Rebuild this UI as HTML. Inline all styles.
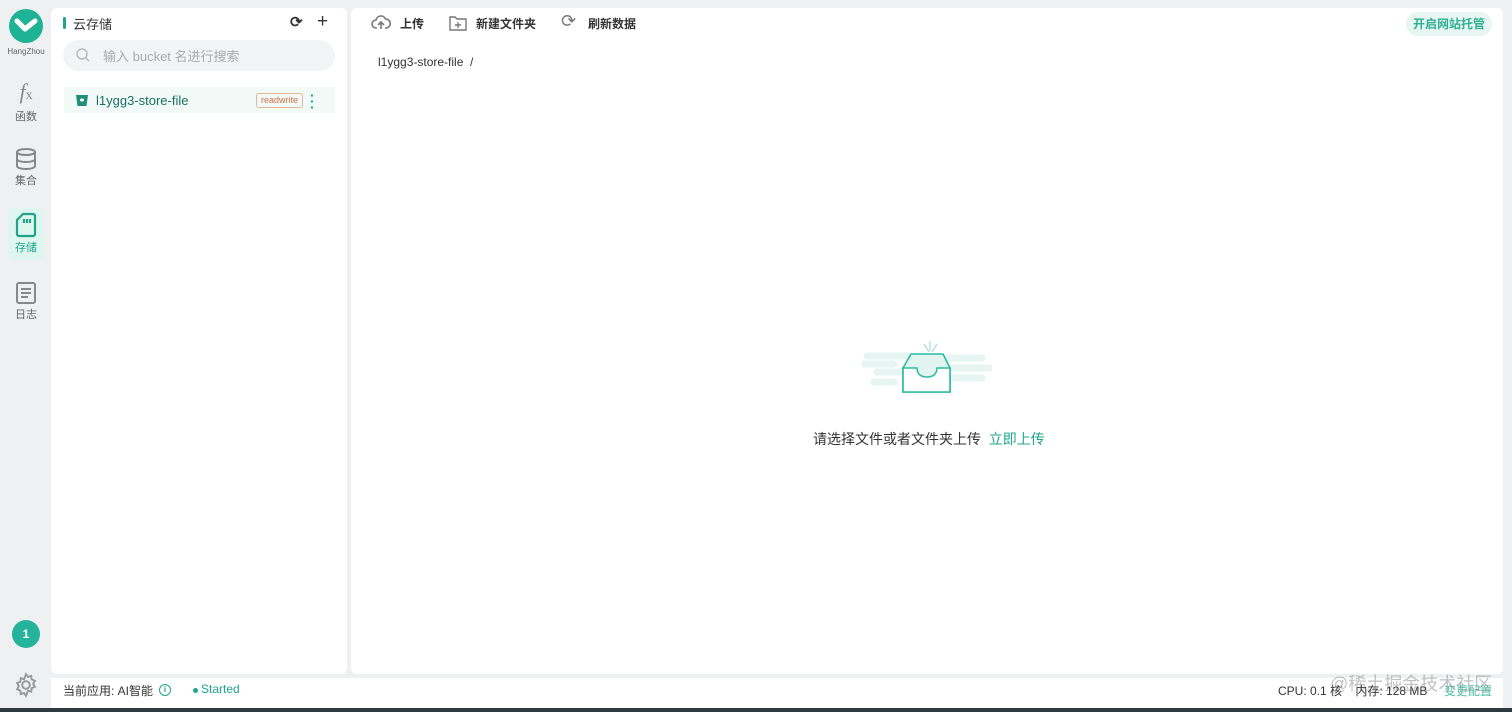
<!DOCTYPE html>
<html><head><meta charset="utf-8"><style>
*{margin:0;padding:0;box-sizing:border-box}
body{width:1512px;height:712px;background:#eff0f2;font-family:"Liberation Sans","Noto Sans CJK SC",sans-serif;position:relative;overflow:hidden;color:#333}
.abs{position:absolute}
.rail .it{position:absolute;left:8px;width:36px;text-align:center;font-size:11px;color:#666}
.panel{background:#fff;border-radius:6px}
</style></head><body>
<div class="abs" style="left:9px;top:9px;width:34px;height:34px;border-radius:50%;background:#1fb396"></div>
<svg class="abs" style="left:14px;top:18px" width="24" height="16" viewBox="0 0 24 16"><path d="M3 3 L11 11 L21 3" stroke="#fff" stroke-width="5" fill="none" stroke-linejoin="round" stroke-linecap="round"/></svg>
<div class="abs" style="left:0;top:47px;width:52px;text-align:center;font-size:8px;color:#666">HangZhou</div>
<div class="rail">
<div class="it" style="top:80px"><div style="font-family:'Liberation Serif',serif;font-style:italic;font-size:22px;color:#888;line-height:24px">f<span style="font-size:14px;font-style:normal">x</span></div><div>函数</div></div>
<div class="it" style="top:147px"><svg width="24" height="24" viewBox="0 0 24 24" fill="none" stroke="#888" stroke-width="2"><ellipse cx="12" cy="5" rx="9" ry="3"/><path d="M3 5v14c0 1.7 4 3 9 3s9-1.3 9-3V5M3 12c0 1.7 4 3 9 3s9-1.3 9-3"/></svg><div style="margin-top:-2px">集合</div></div>
<div class="abs" style="left:8px;top:208px;width:36px;height:52px;background:#dff5ef;border-radius:6px"></div>
<div class="it" style="top:212px;color:#1fa58a"><svg width="24" height="26" viewBox="0 0 24 26" fill="none" stroke="#1fa58a" stroke-width="2.2"><path d="M9 2h10a2 2 0 0 1 2 2v18a2 2 0 0 1-2 2H5a2 2 0 0 1-2-2V8z"/><path d="M10 7v4M13 7v4M16 7v4"/></svg><div style="margin-top:-2px">存储</div></div>
<div class="it" style="top:281px"><svg width="24" height="24" viewBox="0 0 24 24" fill="none" stroke="#888" stroke-width="2"><rect x="3" y="2" width="18" height="20" rx="2"/><path d="M7 8h10M7 12h10M7 16h7"/></svg><div style="margin-top:-2px">日志</div></div>
</div>
<div class="abs" style="left:12px;top:620px;width:28px;height:28px;border-radius:50%;background:#25b49b;color:#fff;font-size:12px;text-align:center;line-height:28px;font-weight:bold">1</div>
<svg class="abs" style="left:13px;top:672px" width="26" height="26" viewBox="0 0 24 24" fill="none" stroke="#999" stroke-width="1.8"><circle cx="12" cy="12" r="3.5"/><path d="M12 2l1.8 2.6 3-1 .4 3.2 3 1.3-1.6 2.8 1.6 2.8-3 1.3-.4 3.2-3-1L12 22l-1.8-2.6-3 1-.4-3.2-3-1.3L5.4 13 3.8 10.2l3-1.3.4-3.2 3 1z"/></svg>
<div class="abs panel" style="left:51px;top:8px;width:296px;height:666px"></div>
<div class="abs" style="left:63px;top:17px;width:3px;height:12px;background:#1fa58a;border-radius:2px"></div>
<div class="abs" style="left:73px;top:14px;font-size:13px;color:#333">云存储</div>
<div class="abs" style="left:290px;top:13px;font-size:15px;font-weight:bold">⟳</div>
<div class="abs" style="left:317px;top:11px;font-size:19px">+</div>
<div class="abs" style="left:63px;top:40px;width:272px;height:31px;background:#f3f4f6;border-radius:16px"></div>
<svg class="abs" style="left:75px;top:47px" width="16" height="16" viewBox="0 0 16 16" fill="none" stroke="#bbb" stroke-width="1.5"><circle cx="7" cy="7" r="5"/><path d="M11 11l3 3"/></svg>
<div class="abs" style="left:103px;top:46px;font-size:13px;color:#aaa">输入 bucket 名进行搜索</div>
<div class="abs" style="left:64px;top:87px;width:271px;height:26px;background:#f2faf8"></div>
<svg class="abs" style="left:75px;top:93px" width="14" height="14" viewBox="0 0 14 14"><path d="M1 2h12l-1.5 11h-9z" fill="#1f8f79"/><ellipse cx="7" cy="7" rx="2" ry="1.5" fill="#fff"/></svg>
<div class="abs" style="left:96px;top:93px;font-size:13px;color:#1a6f60">l1ygg3-store-file</div>
<div class="abs" style="left:256px;top:93px;width:47px;height:15px;border:1px solid #e9b39a;border-radius:3px;font-size:9px;color:#d2714a;text-align:center;line-height:13px">readwrite</div>
<div class="abs" style="left:310px;top:92px;font-size:14px;color:#1fa58a;font-weight:bold;line-height:6px;width:6px">·<br>·<br>·</div>
<div class="abs panel" style="left:351px;top:8px;width:1152px;height:666px"></div>
<svg class="abs" style="left:371px;top:15px" width="20" height="16" viewBox="0 0 20 16" fill="none" stroke="#777" stroke-width="1.6"><path d="M6 13H5a4 4 0 0 1 0-8 5 5 0 0 1 9.5-1A4 4 0 0 1 15 13h-1M10 14V7M7 10l3-3 3 3"/></svg>
<div class="abs" style="left:400px;top:15px;font-size:12px;font-weight:bold;color:#333">上传</div>
<svg class="abs" style="left:449px;top:15px" width="18" height="16" viewBox="0 0 18 16" fill="none" stroke="#777" stroke-width="1.4"><path d="M1 2h5l2 2h9v11H1z"/><path d="M9 7v6M6 10h6"/></svg>
<div class="abs" style="left:476px;top:15px;font-size:12px;font-weight:bold;color:#333">新建文件夹</div>
<div class="abs" style="left:561px;top:11px;font-size:18px;color:#777">⟳</div>
<div class="abs" style="left:588px;top:15px;font-size:12px;font-weight:bold;color:#333">刷新数据</div>
<div class="abs" style="left:1406px;top:12px;width:86px;height:24px;background:#e7f6f2;border-radius:12px;font-size:12px;font-weight:bold;color:#2fae92;text-align:center;line-height:24px">开启网站托管</div>
<div class="abs" style="left:378px;top:55px;font-size:12px;color:#333">l1ygg3-store-file &nbsp;/</div>
<svg class="abs" style="left:862px;top:338px" width="130" height="60" viewBox="0 0 130 60">
<path d="M5 18h40M2 26h30M15 34h30M85 20h35M90 30h38M80 40h40M12 44h20" stroke="#e6f5f1" stroke-width="7" stroke-linecap="round"/>
<path d="M62 6l5 8M68 3v10M75 6l-5 8" stroke="#a8ddd0" stroke-width="1.2"/>
<path d="M49 16h32l7 14v24H41V30z" fill="#e2f4f0" stroke="#2bbba0" stroke-width="1.6"/>
<path d="M41 30h14c0 6 4 9 10 9s10-3 10-9h13v24H41z" fill="#fff" stroke="#2bbba0" stroke-width="1.6"/>
</svg>
<div class="abs" style="left:813px;top:429px;font-size:14px;color:#333">请选择文件或者文件夹上传 <span style="color:#1fa58a">&nbsp;立即上传</span></div>
<div class="abs" style="left:51px;top:678px;width:1452px;height:30px;background:#fff"></div>
<div class="abs" style="left:63px;top:682px;font-size:12px;color:#333">当前应用: AI智能</div>
<div class="abs" style="left:159px;top:684px;width:12px;height:12px;border:1.3px solid #1fa58a;border-radius:50%;font-size:8px;color:#1fa58a;text-align:center;line-height:10px;font-weight:bold">i</div>
<div class="abs" style="left:193px;top:688px;width:5px;height:5px;border-radius:50%;background:#1fa58a"></div>
<div class="abs" style="left:201px;top:682px;font-size:12px;color:#1fa58a">Started</div>
<div class="abs" style="left:1278px;top:682px;font-size:12px;color:#333">CPU: 0.1 核 &nbsp;&nbsp;&nbsp;内存: 128 MB</div>
<div class="abs" style="left:1444px;top:682px;font-size:12px;color:#4fc0a8">变更配置</div>
<div class="abs" style="left:1330px;top:670px;font-size:18px;color:rgba(120,120,120,.45)">@稀土掘金技术社区</div>
<div class="abs" style="left:0;top:708px;width:1512px;height:4px;background:#2d3a40"></div>
</body></html>
